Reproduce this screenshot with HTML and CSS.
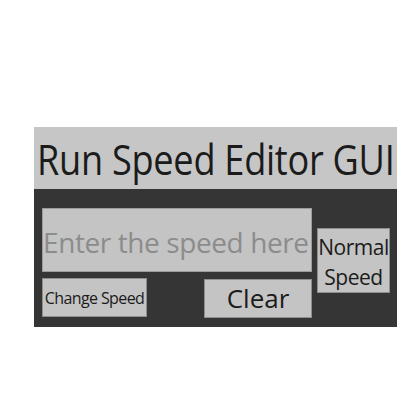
FILE: index.html
```html
<!DOCTYPE html>
<html>
<head>
<meta charset="utf-8">
<link rel="stylesheet" href="styles.css">
</head>
<body>
<div class="frame">
  <div class="title"><span class="title-text">Run Speed Editor GUI</span></div>
  <div class="panel">
    <div class="left">
      <div class="input">Enter the speed here</div>
      <div class="buttons">
        <div class="btn change">Change Speed</div>
        <div class="btn clear">Clear</div>
      </div>
    </div>
    <div class="btn normal">Normal<br>Speed</div>
  </div>
</div>
</body>
</html>
```
FILE: styles.css
```css
html, body { margin: 0; padding: 0; background: #ffffff; }
body { width: 420px; height: 420px; font-family: "Open Sans", sans-serif; }
.frame { position: relative; margin: 127px 0 0 34px; width: 363px; }
.title {
  height: 62px; background: #c6c6c6; color: #1b1b1b;
  font-size: 42px; line-height: 64px; white-space: nowrap; overflow: hidden;
  padding-left: 3px;
}
.title-text { display: inline-block; transform: scaleX(0.86); transform-origin: left center; letter-spacing: -0.3px; }
.panel {
  height: 138px; background: #353535; display: flex;
  padding: 19px 0 0 8px; box-sizing: border-box;
}
.left { width: 270px; display: flex; flex-direction: column; }
.input {
  height: 64px; background: #c4c4c4; border: 1px solid #9c9c9c; box-sizing: border-box;
  color: #8c8c8c; font-size: 28px; line-height: 67px; white-space: nowrap;
  padding-left: 0; letter-spacing: -0.4px; overflow: hidden;
}
.buttons { display: flex; justify-content: space-between; margin-top: 6px; }
.btn {
  background: #c4c4c4; border: 1px solid #8e8e8e; box-sizing: border-box;
  color: #1b1b1b; text-align: center; white-space: nowrap;
}
.change { width: 105px; height: 39px; font-size: 16px; line-height: 39px; letter-spacing: -0.6px; }
.clear { width: 108px; height: 39px; margin-top: 1px; font-size: 26px; line-height: 37px; }
.normal {
  width: 73px; height: 65px; margin: 20px 0 0 5px;
  font-size: 21px; line-height: 30px; padding-top: 3px; letter-spacing: -0.5px;
}
```
